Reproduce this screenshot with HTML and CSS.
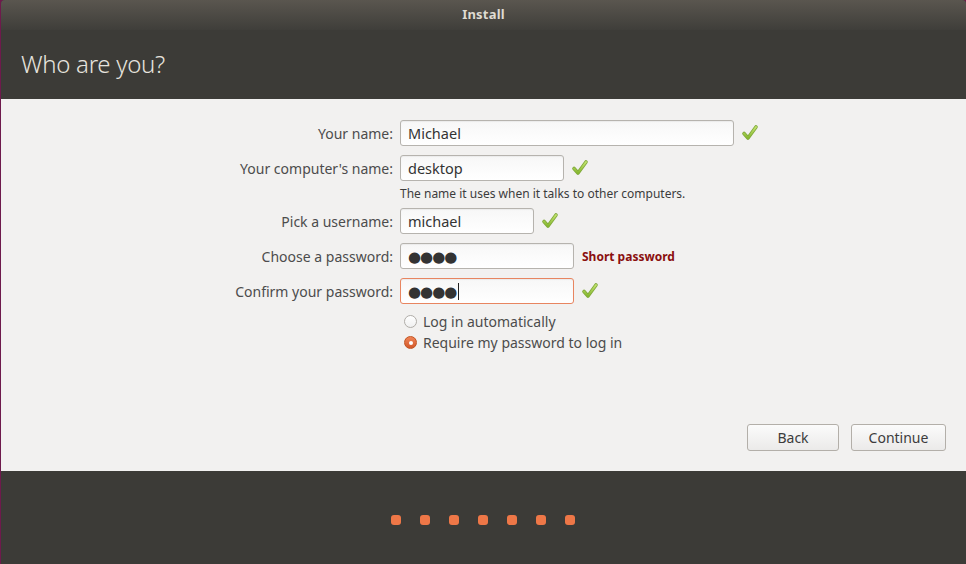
FILE: index.html
```html
<!DOCTYPE html>
<html>
<head>
<meta charset="utf-8">
<link rel="stylesheet" href="styles.css">
</head>
<body>
<div class="window">
  <div class="titlebar">Install</div>
  <div class="header"><h1>Who are you?</h1></div>
  <div class="content">
    <div class="form">
      <div class="row">
        <label class="lbl">Your name:</label>
        <div class="input w-name">Michael</div>
        <svg class="check" viewBox="0 0 18 18"><defs><linearGradient id="g1" x1="0" y1="0" x2="0" y2="1"><stop offset="0" stop-color="#c2e36e"/><stop offset="1" stop-color="#86b72f"/></linearGradient></defs><path d="M3 9.5 L7 14 L15 3" fill="none" stroke="#7fa83a" stroke-width="3.6" stroke-linecap="round" stroke-linejoin="round"/><path d="M3 9.5 L7 14 L15 3" fill="none" stroke="url(#g1)" stroke-width="2" stroke-linecap="round" stroke-linejoin="round"/></svg>
      </div>
      <div class="row">
        <label class="lbl">Your computer's name:</label>
        <div class="input w-comp">desktop</div>
        <svg class="check" viewBox="0 0 18 18"><path d="M3 9.5 L7 14 L15 3" fill="none" stroke="#7fa83a" stroke-width="3.6" stroke-linecap="round" stroke-linejoin="round"/><path d="M3 9.5 L7 14 L15 3" fill="none" stroke="url(#g1)" stroke-width="2" stroke-linecap="round" stroke-linejoin="round"/></svg>
      </div>
      <div class="hint">The name it uses when it talks to other computers.</div>
      <div class="row">
        <label class="lbl">Pick a username:</label>
        <div class="input w-user">michael</div>
        <svg class="check" viewBox="0 0 18 18"><path d="M3 9.5 L7 14 L15 3" fill="none" stroke="#7fa83a" stroke-width="3.6" stroke-linecap="round" stroke-linejoin="round"/><path d="M3 9.5 L7 14 L15 3" fill="none" stroke="url(#g1)" stroke-width="2" stroke-linecap="round" stroke-linejoin="round"/></svg>
      </div>
      <div class="row">
        <label class="lbl">Choose a password:</label>
        <div class="input w-pass dots">●●●●</div>
        <span class="warn">Short password</span>
      </div>
      <div class="row">
        <label class="lbl">Confirm your password:</label>
        <div class="input w-pass dots focus">●●●●<span class="caret"></span></div>
        <svg class="check" viewBox="0 0 18 18"><path d="M3 9.5 L7 14 L15 3" fill="none" stroke="#7fa83a" stroke-width="3.6" stroke-linecap="round" stroke-linejoin="round"/><path d="M3 9.5 L7 14 L15 3" fill="none" stroke="url(#g1)" stroke-width="2" stroke-linecap="round" stroke-linejoin="round"/></svg>
      </div>
      <div class="radios">
        <div class="radio-row"><span class="radio"></span>Log in automatically</div>
        <div class="radio-row"><span class="radio on"></span>Require my password to log in</div>
      </div>
    </div>
    <div class="buttons">
      <button class="btn btn-back">Back</button>
      <button class="btn btn-cont">Continue</button>
    </div>
  </div>
  <div class="footer">
    <div class="dots-row">
      <span class="dot"></span><span class="dot"></span><span class="dot"></span><span class="dot"></span><span class="dot"></span><span class="dot"></span><span class="dot"></span>
    </div>
  </div>
</div>
</body>
</html>
```
FILE: styles.css
```css
html, body {
  margin: 0;
  padding: 0;
}
body {
  background: #6e1a4c;
  width: 966px;
  height: 564px;
  overflow: hidden;
  font-family: "Noto Sans", "DejaVu Sans", sans-serif;
}
.window {
  margin-left: 1px;
  height: 564px;
  display: flex;
  flex-direction: column;
  background: #3c3b37;
  border-radius: 4px 4px 0 0;
  overflow: hidden;
}
.titlebar {
  height: 30px;
  flex: 0 0 30px;
  background: linear-gradient(#5a564f, #3f3e3a);
  color: #dfdbd2;
  font-size: 13px;
  font-weight: bold;
  text-align: center;
  line-height: 29px;
  letter-spacing: 0.2px;
}
.header {
  flex: 0 0 69px;
  background: #3c3b37;
  display: flex;
  align-items: center;
  padding-left: 20px;
}
.header h1 {
  margin: 0 0 2px 0;
  font-weight: 300;
  font-size: 24px;
  color: #e6e3de;
  letter-spacing: -0.3px;
}
.content {
  flex: 0 0 372px;
  background: #f2f1f0;
  display: flex;
  flex-direction: column;
  color: #3c3c3c;
  font-size: 14px;
}
.form {
  padding-top: 21px;
  display: flex;
  flex-direction: column;
}
.row {
  display: flex;
  align-items: center;
  height: 26px;
  margin-bottom: 9px;
}
.lbl {
  width: 392px;
  text-align: right;
  margin-right: 7px;
  color: #4c4c4c;
}
.input {
  box-sizing: border-box;
  height: 26px;
  border: 1px solid #b6b3ae;
  border-radius: 3px;
  background: linear-gradient(#f7f7f7, #ffffff);
  padding-left: 7px;
  line-height: 24px;
  color: #333;
  font-size: 14.5px;
  box-shadow: inset 0 1px 1px rgba(0,0,0,0.05);
}
.w-name { width: 334px; }
.w-comp { width: 164px; }
.w-user { width: 134px; }
.w-pass { width: 174px; }
.dots {
  font-size: 15px;
  letter-spacing: -1px;
  color: #333;
  display: flex;
  align-items: center;
}
.focus {
  border-color: #e88560;
}
.caret {
  display: inline-block;
  width: 1px;
  height: 17px;
  background: #222;
  margin-left: 2px;
}
.check {
  width: 18px;
  height: 18px;
  margin-left: 7px;
}
.warn {
  margin-left: 8px;
  color: #8a0f0f;
  font-weight: bold;
  font-size: 12px;
}
.hint {
  margin-left: 399px;
  margin-top: -5px;
  margin-bottom: 5px;
  font-size: 12px;
  color: #3c3c3c;
  height: 18px;
  line-height: 18px;
}
.radios {
  margin-left: 403px;
  margin-top: -2px;
  display: flex;
  flex-direction: column;
}
.radio-row {
  display: flex;
  align-items: center;
  height: 21px;
  color: #4c4c4c;
}
.radio {
  box-sizing: border-box;
  width: 13px;
  height: 13px;
  border-radius: 50%;
  border: 1px solid #b0ada8;
  background: linear-gradient(#ffffff, #f0f0f0);
  margin-right: 6px;
  position: relative;
}
.radio.on {
  background: linear-gradient(#f08457, #d2582a);
  border-color: #c2521f;
}
.radio.on::after {
  content: "";
  position: absolute;
  left: 3.5px;
  top: 3.5px;
  width: 4px;
  height: 4px;
  border-radius: 50%;
  background: #fff;
}
.buttons {
  margin-top: auto;
  margin-bottom: 20px;
  display: flex;
  justify-content: flex-end;
  gap: 12px;
  padding-right: 20px;
}
.btn {
  box-sizing: border-box;
  height: 27px;
  border: 1px solid #b3afa9;
  border-radius: 3px;
  background: linear-gradient(#fbfbfb, #ebeae9);
  font-family: inherit;
  font-size: 14px;
  color: #3c3c3c;
  padding: 0;
}
.btn-back { width: 92px; }
.btn-cont { width: 95px; }
.footer {
  flex: 1;
  background: #3c3b37;
  display: flex;
  justify-content: center;
  padding-top: 44px;
}
.dots-row {
  display: flex;
  gap: 19px;
  height: 10px;
  margin-right: 2px;
}
.dot {
  width: 10px;
  height: 10px;
  border-radius: 3px;
  background: #ee7747;
}
```
